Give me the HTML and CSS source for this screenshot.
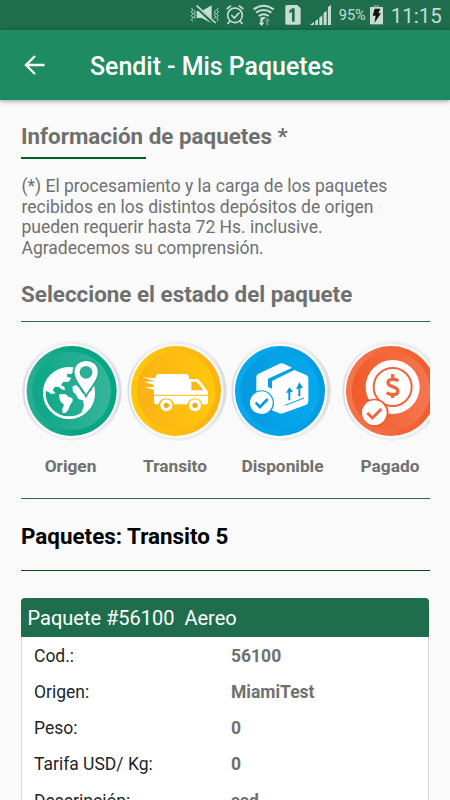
FILE: index.html
```html
<!DOCTYPE html>
<html lang="es">
<head>
<meta charset="utf-8">
<title>Sendit - Mis Paquetes</title>
<link rel="stylesheet" href="styles.css">
</head>
<body>
<div class="screen">
  <div class="status">
    <svg class="signals" viewBox="30 0 430 90">
      <g fill="none" stroke="#c7ddd3" stroke-width="3">
        <path d="M34 24l5 5-5 6 5 6-5 6 5 6-5 6 5 5M42 31l4 5-4 5 4 5-4 5 4 5M115 24l-5 5 5 6-5 6 5 6-5 6 5 6-5 5M107 31l-4 5 4 5-4 5 4 5-4 5"/>
      </g>
      <path fill="#c7ddd3" d="M50 33h15l30-17v54L65 54H50z"/>
      <path d="M48 19l56 53" stroke="#1e6e4e" stroke-width="10"/>
      <path d="M50 17l57 52" stroke="#c7ddd3" stroke-width="5"/>
      <g fill="none" stroke="#c7ddd3" stroke-width="5">
        <circle cx="165" cy="46" r="22"/>
        <path d="M154 45l9 9 15-16M140 27l13-10M177 17l13 10M149 64l-6 8M181 64l6 8"/>
        <path d="M221 28q30-22 60 0M228 38q23-16 46 0M236 48q15-11 30 0" stroke-width="6"/>
      </g>
      <path fill="#c7ddd3" d="M242 51h16l-8 9zM241 54h7v14h5l-8 10-9-10h5z"/>
      <path fill="#6ba188" d="M262 53l8 9h-5v14h-6V62h-5z"/>
      <path fill="#c7ddd3" d="M321 15h31l10 10v44q0 5-5 5h-36q-5 0-5-5V20q0-5 5-5z"/>
      <path fill="#1e6e4e" d="M337 25h7v40h-8V36l-8 3v-7z"/>
      <path fill="#c7ddd3" d="M390 75l12-9v9zM406 63l8-6v18h-8zM418 53l9-7v29h-9zM431 39l9-7v43h-9zM444 22l9-8v61h-9z"/>
    </svg>
    <span class="percent">95%</span>
    <svg class="battery" viewBox="567 12 45 63">
      <path fill="#6b9380" d="M580 15h18v8h-18z"/>
      <path fill="#c7ddd3" d="M570 21h39v52h-39z"/>
      <path fill="#111" d="M584 26h17l-6 14h8l-20 29 4-22h-9z"/>
    </svg>
    <span class="clock">11:15</span>
  </div>
  <header class="appbar">
    <svg class="back" viewBox="0 0 22 22"><path d="M20.500 11H2.500M11 2L2 11l9 9" fill="none" stroke="#fff" stroke-width="2.300"/></svg>
    <h1>Sendit - Mis Paquetes</h1>
  </header>
  <main>
    <h2 class="info">Información de paquetes *</h2>
    <p class="note">(*) El procesamiento y la carga de los paquetes recibidos en los distintos depósitos de origen pueden requerir hasta 72 Hs. inclusive. Agradecemos su comprensión.</p>
    <h2 class="choose">Seleccione el estado del paquete</h2>
    <div class="states">
      <div class="state origin">
        <svg viewBox="0 0 330 330">
          <defs>
            <linearGradient id="ring" x1="0" x2="1"><stop offset="0" stop-color="#dcdfe2"/><stop offset=".25" stop-color="#f0f1f2"/><stop offset=".8" stop-color="#ececee"/><stop offset="1" stop-color="#dadbdd"/></linearGradient>
            <linearGradient id="green"><stop stop-color="#0ca687"/><stop offset="1" stop-color="#35b59c"/></linearGradient>
            <linearGradient id="greenRim"><stop stop-color="#2bae94"/><stop offset=".5" stop-color="#08a584"/><stop offset="1" stop-color="#08a584"/></linearGradient>
          </defs>
          <circle cx="171" cy="168" r="149" fill="url(#ring)"/><circle cx="170" cy="168" r="141" fill="#fafafa"/>
          <circle cx="170" cy="168" r="135" fill="url(#greenRim)"/><circle cx="170" cy="168" r="118" fill="url(#green)"/>
          <circle cx="162" cy="174" r="74" fill="none" stroke="#fff" stroke-width="8"/>
          <path fill="#fff" d="M91 168c2-37 31-66 69-69l15 10-6 8-12-1-1 9 13 4-8 11-17 1-6 10 10 4 2 11-10-3-9-8-12 1-6 10 9 9-14 2-8-7z"/>
          <path fill="#fff" d="M133 178l18-1 10 9 11 3 1 9-8 13-5 13-9 10h-8l-1-13 5-12-10-9-4-12z"/>
          <path fill="#fff" d="M172 155l10-5 9 7 12 18 11 5 15-14 9-2q4 31-12 56l-20 17-5-9 6-15-3-17-14-4-8-14-8-8z"/>
          <path fill="#fff" stroke="#1eaa8c" stroke-width="5" d="M213 184c-9-22-37-44-37-72 0-49 75-49 75 0 0 28-28 49-38 72z"/>
          <circle cx="213" cy="112" r="19" fill="#2eae96"/>
        </svg>
        <span>Origen</span>
      </div>
      <div class="state transit">
        <svg viewBox="0 0 330 330">
          <defs>
            <linearGradient id="yellow"><stop stop-color="#fbb116"/><stop offset="1" stop-color="#ffc80a"/></linearGradient>
            <linearGradient id="yellowRim"><stop stop-color="#ffc80a"/><stop offset="1" stop-color="#fbb116"/></linearGradient>
          </defs>
          <circle cx="165" cy="168" r="149" fill="url(#ring)"/><circle cx="163" cy="168" r="141" fill="#fafafa"/>
          <circle cx="162" cy="168" r="135" fill="url(#yellowRim)"/><circle cx="162" cy="168" r="118" fill="url(#yellow)"/>
          <path fill="#fff" d="M63 127l35 3 8-13h84q10 0 11 10v5h23q5 0 9 5l21 27q4 5 4 11v25q0 8-8 8h-9q-4-18-22-18t-23 18h-40q-4-18-23-18t-24 18h-6q-6 0-7-8v-35l-28-8 28-1v-6l-29-9 30-2z"/>
          <path fill="#fcb915" d="M208 140h12q4 0 7 4l17 22h-36z"/>
          <path stroke="#fcb915" stroke-width="3" d="M96 181h162"/>
          <g fill="#fff"><circle cx="133" cy="211" r="18"/><circle cx="219" cy="211" r="18"/></g>
          <g fill="#edad17"><circle cx="133" cy="211" r="8"/><circle cx="219" cy="211" r="8"/></g>
        </svg>
        <span>Transito</span>
      </div>
      <div class="state available">
        <svg viewBox="0 0 330 330">
          <defs>
            <linearGradient id="blue"><stop stop-color="#0699df"/><stop offset="1" stop-color="#04aaee"/></linearGradient>
            <linearGradient id="blueRim"><stop stop-color="#04aaee"/><stop offset="1" stop-color="#0699df"/></linearGradient>
          </defs>
          <circle cx="159" cy="168" r="149" fill="url(#ring)"/><circle cx="157" cy="168" r="141" fill="#fafafa"/>
          <circle cx="156" cy="168" r="135" fill="url(#blueRim)"/><circle cx="156" cy="168" r="118" fill="url(#blue)"/>
          <path fill="#fff" d="M85 126q0-7 7-10l61-29q8-4 16 0l23 11-72 33v25l12 5v-23l67-33 36 15q6 3 6 10v68q0 9-8 12l-66 24q-8 3-15 0l-20-8-47-57z"/>
          <circle cx="100" cy="204" r="38" fill="#069fe3"/><circle cx="100" cy="203" r="34" fill="#fff"/>
          <path d="M83 203l13 13 23-24" fill="none" stroke="#0799dd" stroke-width="8"/>
          <path d="M184 196v-30M214 184v-30" stroke="#0799dd" stroke-width="6"/><path d="M174 174l10-17 11 13zM204 162l10-20 11 16z" fill="#0799dd"/>
          <path d="M171 211l57-22" stroke="#0799dd" stroke-width="3"/>
        </svg>
        <span>Disponible</span>
      </div>
      <div class="state paid">
        <svg viewBox="0 0 330 330">
          <defs>
            <linearGradient id="orange"><stop stop-color="#f15a29"/><stop offset="1" stop-color="#f47650"/></linearGradient>
            <linearGradient id="orangeRim"><stop stop-color="#f47650"/><stop offset="1" stop-color="#f15a29"/></linearGradient>
          </defs>
          <circle cx="171" cy="168" r="149" fill="url(#ring)"/><circle cx="169" cy="168" r="141" fill="#fafafa"/>
          <circle cx="168" cy="168" r="135" fill="url(#orangeRim)"/><circle cx="168" cy="168" r="118" fill="url(#orange)"/>
          <circle cx="173" cy="156" r="81" fill="#fff"/><circle cx="173" cy="156" r="57" fill="none" stroke="#ee653b" stroke-width="6"/>
          <path d="M190 138q-8-6-18-5-13 1-13 10 0 7 14 12 16 6 16 14 0 10-15 10-11 0-19-6M173 117v15M173 176v13" fill="none" stroke="#ee683f" stroke-width="10"/>
          <circle cx="119" cy="233" r="42" fill="#f15e2f"/><circle cx="118" cy="233" r="37" fill="#fff"/>
          <path d="M97 234l15 15 27-27" fill="none" stroke="#ee653b" stroke-width="9"/>
        </svg>
        <span>Pagado</span>
      </div>
    </div>
    <h2 class="summary">Paquetes: Transito 5</h2>
    <section class="card">
      <h3>Paquete #56100&nbsp; Aereo</h3>
      <dl>
        <dt>Cod.:</dt><dd>56100</dd>
        <dt>Origen:</dt><dd>MiamiTest</dd>
        <dt>Peso:</dt><dd>0</dd>
        <dt>Tarifa USD/ Kg:</dt><dd>0</dd>
        <dt>Descripción:</dt><dd>ssd</dd>
      </dl>
    </section>
  </main>
</div>
</body>
</html>
```

FILE: styles.css
```css
* { box-sizing: border-box; }
body { margin: 0; font-family: Roboto, "Liberation Sans", sans-serif; }
h1, h2, h3, p, dl, dd { margin: 0; }
.screen { width: 450px; height: 800px; overflow: hidden; background: #fafafa; display: flex; flex-direction: column; }
.status { height: 30px; flex: none; background: #1e6e4e; color: #c7ddd3; display: flex; align-items: flex-start; padding-left: 190px; }
.signals { width: 143.300px; height: 30px; flex: none; }
.percent { width: 36px; margin-left: 5.500px; font-size: 14.500px; line-height: 32px; flex: none; }
.battery { width: 15px; height: 21px; margin: 4px 0 0 -6px; flex: none; }
.clock { margin-left: 7px; font-size: 20.500px; line-height: 32px; }
.appbar { height: 70px; flex: none; background: #1f8b63; color: #fff; display: flex; align-items: center; padding-left: 24px; box-shadow: 0 1px 5px rgba(0, 0, 0, .4); }
.back { width: 22px; height: 22px; margin-right: 44px; }
h1 { font-size: 24.900px; font-weight: 500; line-height: 30px; padding-top: 4px; }
main { padding: 21px 20px 0 21px; }
h2 { font-size: 22.400px; font-weight: 700; line-height: 30px; color: #6f6f6f; }
.info::after { content: ""; display: block; width: 125px; height: 2px; margin-top: 6px; background: #006127; }
.note { margin-top: 17px; padding-left: .5px; font-size: 17.500px; line-height: 20.600px; color: #707070; width: 380px; }
.choose { margin-top: 21px; padding-bottom: 12px; border-bottom: 1px solid #27694a; }
.states { height: 177px; padding-top: 13px; overflow: hidden; display: flex; border-bottom: 1px solid #27694a; }
.state { flex: none; display: flex; flex-direction: column; align-items: center; width: 106px; }
.state svg { width: 110px; height: 110px; flex: none; }
.state span { margin-top: 10px; font-size: 17.300px; line-height: 22px; font-weight: 700; color: #707070; }
.origin { width: 98px; }
.origin span { padding-left: 1px; }
.transit { margin-left: 5px; }
.transit span { padding-right: 4px; }
.available span { padding-right: 1px; }
.paid { width: 108px; }
.summary { color: #000; height: 72px; line-height: 74px; border-bottom: 1px solid #0b4a1d; }
.card { margin: 27px 1px 0 0; background: #fff; border: 1px solid #d9d9d9; border-top: 0; border-radius: 4px 4px 0 0; height: 300px; }
h3 { height: 39px; margin: 0 -1px; padding-left: 6.500px; background: #1e6e4e; color: #fff; font-size: 20px; font-weight: 400; line-height: 40px; border-radius: 4px 4px 0 0; }
dl { display: grid; grid-template-columns: 197px 1fr; grid-auto-rows: 36.200px; padding: .5px 0 0 12px; font-size: 17.500px; line-height: 36px; color: #1d262b; }
dd { color: #707070; font-weight: 700; }
```
